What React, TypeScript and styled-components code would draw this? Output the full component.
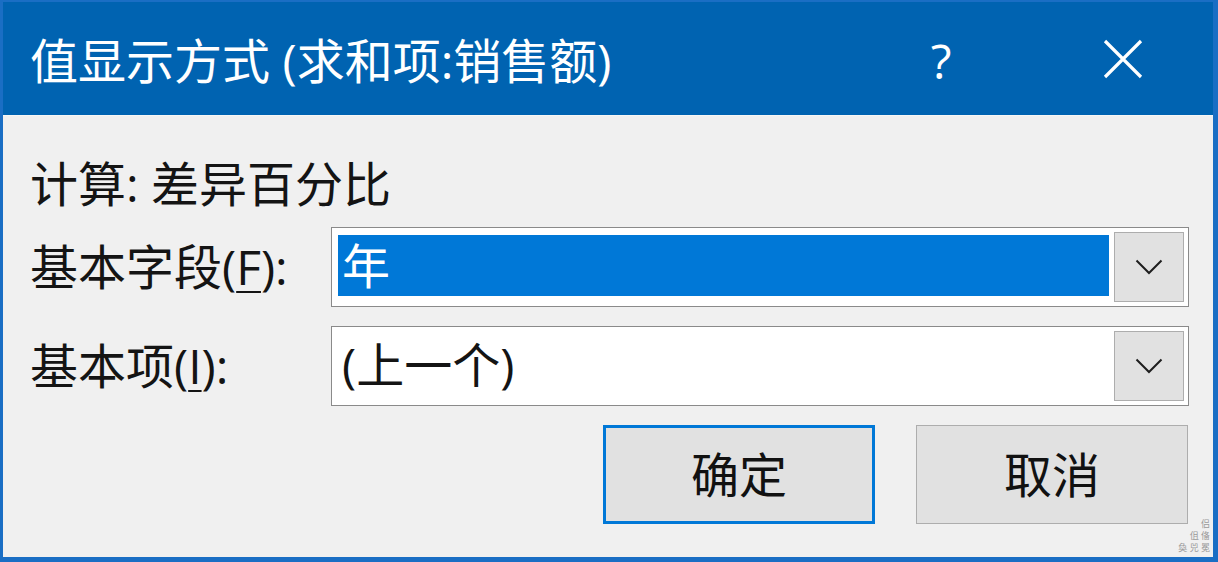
import React from "react";
import styled, { createGlobalStyle } from "styled-components";

const GlobalStyle = createGlobalStyle`
	html, body {
		margin: 0;
		padding: 0;
		background: #f0f0f0;
	}
	* {
		box-sizing: border-box;
	}
`;

const FONT = `"Open Sans", "Noto Sans CJK SC", sans-serif`;

const Chevron = () => (
	<svg width="28" height="16" viewBox="0 0 28 16">
		<path d="M1.5 1.5 L14 14 L26.5 1.5" fill="none" stroke="#1e1e1e" strokeWidth="2" />
	</svg>
);

const CloseIcon = () => (
	<svg width="40" height="40" viewBox="0 0 40 40">
		<path d="M2 2 L38 38 M38 2 L2 38" stroke="#fff" strokeWidth="3.2" />
	</svg>
);

const App = () => {
	return (
		<>
			<GlobalStyle />
			<Window>
				<TitleBar>
					<Title>值显示方式 (求和项:销售额)</Title>
					<TitleButton>?</TitleButton>
					<TitleButton wide>
						<CloseIcon />
					</TitleButton>
				</TitleBar>
				<Body>
					<Calc>计算: 差异百分比</Calc>
					<FieldRow>
						<Label>
							基本字段(<u>F</u>):
						</Label>
						<Combo>
							<ComboValue selected>年</ComboValue>
							<DropButton>
								<Chevron />
							</DropButton>
						</Combo>
					</FieldRow>
					<FieldRow>
						<Label>
							基本项(<u>I</u>):
						</Label>
						<Combo>
							<ComboValue>(上一个)</ComboValue>
							<DropButton>
								<Chevron />
							</DropButton>
						</Combo>
					</FieldRow>
					<Buttons>
						<Button primary>确定</Button>
						<Button>取消</Button>
					</Buttons>
					<Grip>
						<span>侣</span>
						<span>伹 俻</span>
						<span>奐 兕 冕</span>
					</Grip>
				</Body>
			</Window>
		</>
	);
};

export default App;

const Window = styled.div`
	position: relative;
	width: 1218px;
	height: 562px;
	display: flex;
	flex-direction: column;
	background: #f0f0f0;
	border-style: solid;
	border-color: #1a6ec4;
	border-width: 2px 5px 5px 3px;
	font-family: ${FONT};
	color: #141414;
`;

const TitleBar = styled.div`
	height: 113px;
	flex-shrink: 0;
	display: flex;
	align-items: center;
	background: #0063b1;
	color: #fff;
	padding-left: 27px;
	padding-top: 4px;
	padding-right: 30px;
`;

const Title = styled.div`
	flex: 1;
	font-size: 48px;
	line-height: 1;
	white-space: nowrap;
`;

const TitleButton = styled.div<{ wide?: boolean }>`
	width: 120px;
	margin-left: ${(p) => (p.wide ? "62px" : "0")};
	margin-top: ${(p) => (p.wide ? "-4px" : "0")};
	display: flex;
	align-items: center;
	justify-content: center;
	font-size: 48px;
	line-height: 1;
`;

const Body = styled.div`
	position: relative;
	flex: 1;
	display: flex;
	flex-direction: column;
	padding: 40px 24px 0 27px;
	border-top: 1px solid #f6f6f6;
`;

const Calc = styled.div`
	height: 56px;
	display: flex;
	align-items: center;
	font-size: 48px;
	line-height: 1;
	margin-bottom: 15px;
`;

const FieldRow = styled.div`
	display: grid;
	grid-template-columns: 301px 1fr;
	align-items: center;
	margin-bottom: 19px;
`;

const Label = styled.div`
	font-size: 48px;
	line-height: 1;
	white-space: nowrap;

	u {
		text-decoration-thickness: 2px;
		text-underline-offset: 6px;
	}
`;

const Combo = styled.div`
	height: 80px;
	display: flex;
	align-items: stretch;
	padding: 4px;
	background: #fff;
	border: 1px solid #8a8a8a;
`;

const ComboValue = styled.div<{ selected?: boolean }>`
	flex: 1;
	display: flex;
	align-items: center;
	margin: 3px 5px 6px 2px;
	padding-left: 4px;
	font-size: 48px;
	line-height: 1;
	background: ${(p) => (p.selected ? "#0078d7" : "transparent")};
	color: ${(p) => (p.selected ? "#fff" : "#141414")};
`;

const DropButton = styled.div`
	width: 70px;
	display: flex;
	align-items: center;
	justify-content: center;
	background: #e1e1e1;
	border: 1px solid #adadad;
`;

const Buttons = styled.div`
	display: flex;
	justify-content: flex-end;
	gap: 41px;
	padding-right: 1px;
`;

const Button = styled.div<{ primary?: boolean }>`
	width: 272px;
	height: 99px;
	display: flex;
	align-items: center;
	justify-content: center;
	background: #e1e1e1;
	border: ${(p) => (p.primary ? "3px solid #0078d7" : "1px solid #adadad")};
	font-size: 48px;
	line-height: 1;
	color: #111;
`;

const Grip = styled.div`
	position: absolute;
	right: 3px;
	bottom: 3px;
	display: flex;
	flex-direction: column;
	align-items: flex-end;
	font-size: 9px;
	line-height: 12px;
	color: #9a9a9a;
`;
